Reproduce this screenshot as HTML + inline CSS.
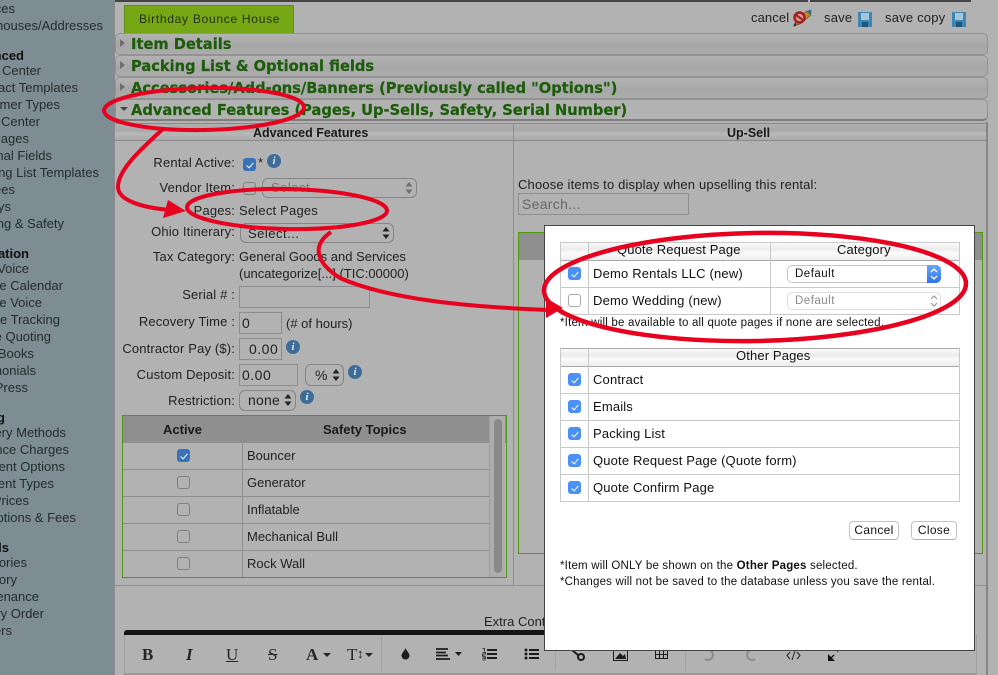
<!DOCTYPE html>
<html><head><meta charset="utf-8"><style>
html,body{margin:0;padding:0;width:998px;height:675px;overflow:hidden;background:#b2b2b2}
body{position:relative;font-family:"Liberation Sans",sans-serif;font-size:13px;color:#222}
.t{position:absolute;white-space:nowrap;line-height:16px;margin-top:1px}
.s{position:absolute;white-space:nowrap;line-height:16px;color:#262c2f;font-size:13px;margin-top:1px}
.l{position:absolute;white-space:nowrap;line-height:16px;right:763px;margin-top:1px;letter-spacing:.15px}
.r{position:absolute}
.h{position:absolute;white-space:nowrap;line-height:20px;font-family:"DejaVu Sans",sans-serif;font-weight:bold;font-size:14.65px;color:#1c5c0a;left:131px;margin-top:1px;-webkit-text-stroke:.2px #1c5c0a}
.acc{position:absolute;left:115px;width:871px;height:20px;border:1px solid #929292;border-radius:5px;background:linear-gradient(#b3b3b3 0,#a9a9a9 50%,#a6a6a6 55%,#acacac 100%)}
.tri{position:absolute;left:120px;width:0;height:0;border-top:4px solid transparent;border-bottom:4px solid transparent;border-left:5px solid #6e6e6e}
.cb{position:absolute;width:11px;height:11px;border:1px solid #808080;border-radius:3px;background:#b2b2b2}
.cb.on{background:#3a72b8;border-color:#3a72b8}
.m.cb{background:#fff;border-color:#aaa}
.m.cb.on{background:#4a90f5;border-color:#4a90f5}
.cb.on:after{content:"";position:absolute;left:3.5px;top:1.5px;width:3px;height:6px;border:solid #fff;border-width:0 1.4px 1.4px 0;transform:rotate(40deg)}
.inp{position:absolute;border:1px solid #8e8e8e;box-sizing:border-box}
.sel{position:absolute;border:1px solid #858585;border-radius:6px;box-sizing:border-box;background:#b2b2b2}
.i{position:absolute;width:14px;height:14px;border-radius:50%;background:#3e6c98;color:#dce6ee;font:italic bold 11px/14px "Liberation Serif",serif;text-align:center}
.ln{position:absolute;background:#8f8f8f}
.ml{position:absolute;background:#c9c9c9}
.hd{position:absolute;background:linear-gradient(#fafafa 0,#ececec 35%,#fbfbfb 60%,#eeeeee 100%)}
.tb{position:absolute;font:bold 17px/20px "Liberation Serif",serif;color:#262626}
.btn{position:absolute;border:1px solid #c4c4c4;border-bottom-color:#b0b0b0;border-radius:4px;background:#fff;box-sizing:border-box;text-align:center;font-size:12px;line-height:16px;letter-spacing:.3px;color:#111}
</style></head><body>

<!-- sidebar -->
<div class="r" style="left:0;top:0;width:114px;height:675px;background:#7e8c93"></div>
<div class="r" style="left:114px;top:0;width:1px;height:675px;background:#8b8b8b"></div>
<div class="s" style="right:983px;top:0">Places</div>
<div class="s" style="right:895px;top:17px">Warehouses/Addresses</div>
<div class="s" style="right:974px;top:47px;font-weight:bold;color:#111">Advanced</div>
<div class="s" style="right:957px;top:62px">Email Center</div>
<div class="s" style="right:920px;top:79px">Contract Templates</div>
<div class="s" style="right:938px;top:96px">Customer Types</div>
<div class="s" style="right:958px;top:113px">Doc Center</div>
<div class="s" style="right:969px;top:130px">Pages</div>
<div class="s" style="right:946px;top:147px">Additional Fields</div>
<div class="s" style="right:899px;top:164px">Packing List Templates</div>
<div class="s" style="right:983px;top:181px">Fees</div>
<div class="s" style="right:987px;top:198px">Keys</div>
<div class="s" style="right:934px;top:215px">Training &amp; Safety</div>
<div class="s" style="right:969px;top:245px;font-weight:bold;color:#111">Automation</div>
<div class="s" style="right:969px;top:260px">A Voice</div>
<div class="s" style="right:935px;top:277px">Online Calendar</div>
<div class="s" style="right:956px;top:294px">Online Voice</div>
<div class="s" style="right:938px;top:311px">Online Tracking</div>
<div class="s" style="right:947px;top:328px">Online Quoting</div>
<div class="s" style="right:964px;top:345px">QuickBooks</div>
<div class="s" style="right:962px;top:362px">Testimonials</div>
<div class="s" style="right:970px;top:379px">WordPress</div>
<div class="s" style="right:993px;top:409px;font-weight:bold;color:#111">Pricing</div>
<div class="s" style="right:932px;top:424px">Delivery Methods</div>
<div class="s" style="right:929px;top:441px">Distance Charges</div>
<div class="s" style="right:933px;top:458px">Payment Options</div>
<div class="s" style="right:944px;top:475px">Payment Types</div>
<div class="s" style="right:969px;top:492px">Prices</div>
<div class="s" style="right:922px;top:509px">Options &amp; Fees</div>
<div class="s" style="right:989px;top:539px;font-weight:bold;color:#111">Tools</div>
<div class="s" style="right:971px;top:554px">Categories</div>
<div class="s" style="right:981px;top:571px">Inventory</div>
<div class="s" style="right:959px;top:588px">Maintenance</div>
<div class="s" style="right:954px;top:605px">Factory Order</div>
<div class="s" style="right:986px;top:622px">Others</div>

<!-- top bar -->
<div class="r" style="left:115px;top:0;width:693px;height:2px;background:#444"></div>
<div class="r" style="left:810px;top:0;width:161px;height:2px;background:#444"></div>

<!-- tab -->
<div class="r" style="left:124px;top:5px;width:168px;height:27px;background:#76a816;border:1px solid #5f8f12;border-bottom:0"></div>
<div class="t" style="left:139px;top:10px;font-size:12px;letter-spacing:.72px;color:#26300f">Birthday Bounce House</div>

<!-- top actions -->
<div class="t" style="left:751px;top:9px;letter-spacing:.1px">cancel</div>
<svg class="r" style="left:793px;top:9px" width="19" height="18" viewBox="0 0 19 18"><path d="M1 17L3 11L14 2L18 6L7 15Z" fill="#c08a2a" stroke="#5a4418" stroke-width=".6"/><path d="M14 2L17.500 0.500L18.500 1.500L18 6Z" fill="#2f6f96"/><circle cx="6.500" cy="8.500" r="5" fill="#c9a09a" stroke="#a81c1c" stroke-width="2.400"/><path d="M3 6L10 11" stroke="#a81c1c" stroke-width="2.200"/><path d="M1 17L3 14.500" stroke="#1b2b55" stroke-width="1.800"/></svg>
<div class="t" style="left:824px;top:9px;letter-spacing:.2px">save</div>
<svg class="r" style="left:858px;top:12px" width="14" height="15" viewBox="0 0 14 15"><rect width="14" height="15" fill="#3f86b4"/><rect x="3" y="1" width="8" height="7" fill="#a6c6d8"/><rect x="4" y="10" width="6" height="5" fill="#1f5778"/></svg>
<div class="t" style="left:885px;top:9px;letter-spacing:.2px">save copy</div>
<svg class="r" style="left:952px;top:12px" width="14" height="15" viewBox="0 0 14 15"><rect width="14" height="15" fill="#3f86b4"/><rect x="3" y="1" width="8" height="7" fill="#a6c6d8"/><rect x="4" y="10" width="6" height="5" fill="#1f5778"/></svg>

<!-- accordions -->
<div class="acc" style="top:33px"></div>
<div class="acc" style="top:55px"></div>
<div class="acc" style="top:77px"></div>
<div class="acc" style="top:99px;background:#b2b2b2;border-bottom:2px solid #7d7d7d;height:19px"></div>
<div class="tri" style="top:39px"></div>
<div class="tri" style="top:61px"></div>
<div class="tri" style="top:83px"></div>
<div class="r" style="left:120px;top:107px;width:0;height:0;border-left:4px solid transparent;border-right:4px solid transparent;border-top:4px solid #444"></div>
<div class="h" style="top:34px">Item Details</div>
<div class="h" style="top:56px">Packing List &amp; Optional fields</div>
<div class="h" style="top:78px">Accessories/Add-ons/Banners (Previously called "Options")</div>
<div class="h" style="top:100px">Advanced Features (Pages, Up-Sells, Safety, Serial Number)</div>

<!-- panel header -->
<div class="r" style="left:115px;top:123px;width:871px;height:16px;background:linear-gradient(#b0b0b0,#a8a8a8 40%,#b8b8b8 60%,#a9a9a9);border-top:1px solid #8a8a8a;border-bottom:1px solid #8a8a8a"></div>
<div class="t" style="left:253px;top:124px;font-weight:bold;font-size:12.5px;color:#1a1a1a">Advanced Features</div>
<div class="t" style="left:727px;top:124px;font-weight:bold;font-size:12.5px;color:#1a1a1a">Up-Sell</div>
<div class="ln" style="left:513px;top:123px;width:1px;height:463px"></div>
<div class="ln" style="left:986px;top:122px;width:2px;height:553px;background:#858585"></div>
<div class="ln" style="left:115px;top:585px;width:871px;height:1px"></div>

<!-- form -->
<div class="l" style="top:154px">Rental Active:</div>
<div class="cb on" style="left:243px;top:158px"></div><div class="t" style="left:258px;top:154px">*</div><div class="i" style="left:267px;top:154px">i</div>
<div class="l" style="top:179px">Vendor Item:</div>
<div class="cb" style="left:243px;top:182px"></div>
<div class="sel" style="left:262px;top:178px;width:155px;height:20px"></div>
<div class="t" style="left:271px;top:179px;color:#787878;letter-spacing:.5px">Select...</div>
<svg class="r" style="left:405px;top:182px" width="8" height="12"><path d="M4 0L7.500 4.500H.5ZM4 12L7.500 7.500H.5Z" fill="#6e6e6e"/></svg>
<div class="l" style="top:202px">Pages:</div><div class="t" style="left:239px;top:202px;letter-spacing:.2px">Select Pages</div>
<div class="l" style="top:223px">Ohio Itinerary:</div>
<div class="sel" style="left:240px;top:223px;width:154px;height:20px"></div>
<div class="t" style="left:248px;top:225px;letter-spacing:.5px">Select...</div>
<svg class="r" style="left:382px;top:227px" width="8" height="12"><path d="M4 0L7.500 4.500H.5ZM4 12L7.500 7.500H.5Z" fill="#222"/></svg>
<div class="l" style="top:248px">Tax Category:</div><div class="t" style="left:239px;top:248px">General Goods and Services</div>
<div class="t" style="left:239px;top:265px">(uncategorize[...] (TIC:00000)</div>
<div class="l" style="top:286px">Serial # :</div><div class="inp" style="left:239px;top:286px;width:131px;height:22px"></div>
<div class="l" style="top:313px">Recovery Time :</div><div class="inp" style="left:239px;top:312px;width:43px;height:22px"></div>
<div class="t" style="left:242px;top:314px;font-size:14px">0</div><div class="t" style="left:286px;top:315px">(# of hours)</div>
<div class="l" style="top:340px">Contractor Pay ($):</div><div class="inp" style="left:239px;top:338px;width:43px;height:22px"></div>
<div class="t" style="left:249px;top:340px;font-size:14px;letter-spacing:.5px">0.00</div><div class="i" style="left:286px;top:340px">i</div>
<div class="l" style="top:366px">Custom Deposit:</div><div class="inp" style="left:239px;top:364px;width:59px;height:22px"></div>
<div class="t" style="left:242px;top:366px;font-size:14px;letter-spacing:.5px">0.00</div>
<div class="sel" style="left:305px;top:364px;width:39px;height:22px"></div><div class="t" style="left:315px;top:366px;font-size:14px">%</div>
<svg class="r" style="left:332px;top:369px" width="8" height="12"><path d="M4 0L7.500 4.500H.5ZM4 12L7.500 7.500H.5Z" fill="#222"/></svg>
<div class="i" style="left:348px;top:365px">i</div>
<div class="l" style="top:392px">Restriction:</div><div class="sel" style="left:239px;top:390px;width:57px;height:21px"></div>
<div class="t" style="left:248px;top:391px;font-size:14px;letter-spacing:.2px">none</div>
<svg class="r" style="left:284px;top:394px" width="8" height="12"><path d="M4 0L7.500 4.500H.5ZM4 12L7.500 7.500H.5Z" fill="#222"/></svg>
<div class="i" style="left:300px;top:390px">i</div>

<!-- safety table -->
<div class="r" style="left:122px;top:415px;width:383px;height:161px;border:1px solid #4f9a12"></div>
<div class="r" style="left:123px;top:416px;width:383px;height:27px;background:#8f8f8f"></div>
<div class="r" style="left:490px;top:416px;width:15px;height:161px;background:#adadad"></div>
<div class="r" style="left:494px;top:419px;width:8px;height:154px;background:#8a8a8a;border-radius:4px"></div>
<div class="ln" style="left:242px;top:443px;width:1px;height:134px"></div>
<div class="ln" style="left:489px;top:416px;width:1px;height:161px;background:#9e9e9e"></div>
<div class="ln" style="left:123px;top:469px;width:366px;height:1px"></div>
<div class="ln" style="left:123px;top:496px;width:366px;height:1px"></div>
<div class="ln" style="left:123px;top:523px;width:366px;height:1px"></div>
<div class="ln" style="left:123px;top:550px;width:366px;height:1px"></div>
<div class="t" style="left:163px;top:421px;font-weight:bold;color:#1a1a1a">Active</div>
<div class="t" style="left:323px;top:421px;font-weight:bold;color:#1a1a1a">Safety Topics</div>
<div class="cb on" style="left:177px;top:449px"></div>
<div class="cb" style="left:177px;top:476px"></div>
<div class="cb" style="left:177px;top:503px"></div>
<div class="cb" style="left:177px;top:530px"></div>
<div class="cb" style="left:177px;top:557px"></div>
<div class="t" style="left:247px;top:447px">Bouncer</div>
<div class="t" style="left:247px;top:474px">Generator</div>
<div class="t" style="left:247px;top:501px">Inflatable</div>
<div class="t" style="left:247px;top:528px">Mechanical Bull</div>
<div class="t" style="left:247px;top:555px">Rock Wall</div>

<!-- upsell -->
<div class="t" style="left:518px;top:176px;font-size:13px;letter-spacing:.16px">Choose items to display when upselling this rental:</div>
<div class="inp" style="left:518px;top:193px;width:171px;height:22px"></div>
<div class="t" style="left:522px;top:195px;font-size:14px;letter-spacing:.3px;color:#666">Search...</div>
<div class="r" style="left:518px;top:232px;width:463px;height:320px;border:1px solid #4f9a12"></div>
<div class="r" style="left:519px;top:233px;width:463px;height:27px;background:#8f8f8f"></div>

<!-- editor -->
<div class="t" style="left:484px;top:613px">Extra Content</div>
<div class="r" style="left:124px;top:630px;width:851px;height:5px;background:#151515;border-radius:3px 0 0 0"></div>
<div class="r" style="left:124px;top:635px;width:1px;height:38px;background:#a0a0a0"></div>
<div class="r" style="left:976px;top:635px;width:1px;height:38px;background:#a0a0a0"></div>
<div class="r" style="left:124px;top:673px;width:853px;height:2px;background:#999"></div>
<div class="r" style="left:381px;top:637px;width:1px;height:34px;background:#a2a2a2"></div>
<div class="r" style="left:555px;top:637px;width:1px;height:34px;background:#a2a2a2"></div>
<div class="r" style="left:685px;top:637px;width:1px;height:34px;background:#a2a2a2"></div>
<div class="tb" style="left:142px;top:645px">B</div>
<div class="tb" style="left:186px;top:645px;font-style:italic">I</div>
<div class="tb" style="left:226px;top:645px;font-weight:normal;text-decoration:underline">U</div>
<div class="tb" style="left:268px;top:645px;font-weight:normal;text-decoration:line-through">S</div>
<div class="tb" style="left:306px;top:645px">A</div>
<div class="r" style="left:323px;top:653px;width:0;height:0;border-left:4px solid transparent;border-right:4px solid transparent;border-top:4px solid #262626"></div>
<div class="tb" style="left:347px;top:645px;font-weight:normal">T</div>
<div class="t" style="left:357px;top:645px;font-size:13px">↕</div>
<div class="r" style="left:365px;top:653px;width:0;height:0;border-left:4px solid transparent;border-right:4px solid transparent;border-top:4px solid #262626"></div>
<svg class="r" style="left:401px;top:648px" width="9" height="12"><path d="M4.500 0C5.500 3 8.500 5 8.500 7.500A4 4 0 0 1 .5 7.500C.5 5 3.500 3 4.500 0Z" fill="#1c1c1c"/></svg>
<svg class="r" style="left:436px;top:648px" width="26" height="12"><path d="M0 1h12M0 4.500h10M0 7.500h12M0 11h14" stroke="#1c1c1c" stroke-width="1.800"/><path d="M19 4h7l-3.500 4z" fill="#1c1c1c"/></svg>
<svg class="r" style="left:482px;top:648px" width="15" height="13"><path d="M5 2h10M5 6h10M5 10h10" stroke="#1c1c1c" stroke-width="2"/><path d="M.5 .5h2v3M.5 4.500h3v1.500h-3v2h3M.5 9h3v1.500h-3M.5 12h3" stroke="#1c1c1c" stroke-width=".8" fill="none"/></svg>
<svg class="r" style="left:524px;top:648px" width="15" height="13"><path d="M5 2h10M5 6h10M5 10h10" stroke="#1c1c1c" stroke-width="2"/><circle cx="2" cy="2" r="1.500" fill="#1c1c1c"/><circle cx="2" cy="6" r="1.500" fill="#1c1c1c"/><circle cx="2" cy="10" r="1.500" fill="#1c1c1c"/></svg>
<svg class="r" style="left:572px;top:649px" width="14" height="12"><circle cx="9" cy="8" r="3" fill="none" stroke="#1c1c1c" stroke-width="2"/><path d="M0 1L6 6" stroke="#1c1c1c" stroke-width="2"/></svg>
<svg class="r" style="left:613px;top:650px" width="15" height="11"><path d="M.5 0V10.500H14.500V0" fill="none" stroke="#1c1c1c"/><path d="M2 9L7 3L10 6L12 4L13 9Z" fill="#1c1c1c"/></svg>
<svg class="r" style="left:655px;top:650px" width="13" height="9"><path d="M.5 .5h12v8h-12zM.5 4.500h12M4.500 .5v8M8.500 .5v8" fill="none" stroke="#1c1c1c"/></svg>
<svg class="r" style="left:703px;top:649px" width="12" height="12"><path d="M4 1A5 5 0 1 1 2 10" fill="none" stroke="#8c8c8c" stroke-width="2"/></svg>
<svg class="r" style="left:745px;top:649px" width="12" height="12"><path d="M8 1A5 5 0 1 0 10 10" fill="none" stroke="#8c8c8c" stroke-width="2"/></svg>
<svg class="r" style="left:786px;top:651px" width="15" height="9"><path d="M4 1L1 4.500L4 8M11 1L14 4.500L11 8M9 0L6 9" fill="none" stroke="#222" stroke-width="1"/></svg>
<svg class="r" style="left:828px;top:649px" width="13" height="12"><path d="M0 12V6L6 12ZM3 9L6 6" fill="#111" stroke="#111" stroke-width="1.400"/><path d="M9 3L12 0" stroke="#555" stroke-width="1"/></svg>

<!-- modal -->
<div class="r" style="left:544px;top:225px;width:431px;height:426px;background:#fff;border:1px solid #444;box-sizing:border-box"></div>

<div class="hd" style="left:561px;top:243px;width:398px;height:17px"></div>
<div class="ml" style="left:560px;top:242px;width:400px;height:1px"></div>
<div class="ml" style="left:560px;top:260px;width:400px;height:1px;background:#aaa"></div>
<div class="ml" style="left:560px;top:287px;width:400px;height:1px"></div>
<div class="ml" style="left:560px;top:314px;width:400px;height:1px"></div>
<div class="ml" style="left:560px;top:242px;width:1px;height:73px"></div>
<div class="ml" style="left:959px;top:242px;width:1px;height:73px"></div>
<div class="ml" style="left:588px;top:242px;width:1px;height:73px"></div>
<div class="ml" style="left:770px;top:242px;width:1px;height:73px"></div>
<div class="t" style="left:617px;top:241px;color:#111;letter-spacing:.12px">Quote Request Page</div>
<div class="t" style="left:837px;top:241px;color:#111;letter-spacing:.12px">Category</div>
<div class="cb m on" style="left:568px;top:267px"></div>
<div class="cb m" style="left:568px;top:294px"></div>
<div class="t" style="left:593px;top:265px;color:#111;letter-spacing:.18px">Demo Rentals LLC (new)</div>
<div class="t" style="left:593px;top:292px;color:#111;letter-spacing:.18px">Demo Wedding (new)</div>
<div class="r" style="left:787px;top:265px;width:154px;height:18px;border:1px solid #c4c4c4;border-radius:5px;background:#fff;box-sizing:border-box"></div>
<div class="r" style="left:927px;top:265px;width:14px;height:18px;border-radius:0 5px 5px 0;background:linear-gradient(#6aa6fa,#2f74ee)"></div>
<svg class="r" style="left:930px;top:268px" width="8" height="12"><path d="M1 4L4 1L7 4M1 8L4 11L7 8" fill="none" stroke="#fff" stroke-width="1.300"/></svg>
<div class="t" style="left:795px;top:265px;font-size:11.500px;letter-spacing:.5px;color:#111">Default</div>
<div class="r" style="left:787px;top:292px;width:154px;height:18px;border:1px solid #dedede;border-radius:5px;background:#fff;box-sizing:border-box"></div>
<svg class="r" style="left:930px;top:295px" width="8" height="12"><path d="M1 4L4 1L7 4M1 8L4 11L7 8" fill="none" stroke="#999" stroke-width="1.200"/></svg>
<div class="t" style="left:795px;top:292px;font-size:11.500px;letter-spacing:.5px;color:#8a8a8a">Default</div>
<div class="t" style="left:560px;top:314px;font-size:11.500px;letter-spacing:.2px;color:#111">*Item will be available to all quote pages if none are selected.</div>

<div class="hd" style="left:561px;top:349px;width:398px;height:17px"></div>
<div class="ml" style="left:560px;top:348px;width:400px;height:1px;background:#aaa"></div>
<div class="ml" style="left:560px;top:366px;width:400px;height:1px;background:#aaa"></div>
<div class="ml" style="left:560px;top:393px;width:400px;height:1px"></div>
<div class="ml" style="left:560px;top:420px;width:400px;height:1px"></div>
<div class="ml" style="left:560px;top:447px;width:400px;height:1px"></div>
<div class="ml" style="left:560px;top:474px;width:400px;height:1px"></div>
<div class="ml" style="left:560px;top:501px;width:400px;height:1px"></div>
<div class="ml" style="left:560px;top:348px;width:1px;height:154px"></div>
<div class="ml" style="left:959px;top:348px;width:1px;height:154px"></div>
<div class="ml" style="left:588px;top:348px;width:1px;height:154px"></div>
<div class="t" style="left:736px;top:347px;color:#111;letter-spacing:.13px">Other Pages</div>
<div class="cb m on" style="left:568px;top:373px"></div>
<div class="cb m on" style="left:568px;top:400px"></div>
<div class="cb m on" style="left:568px;top:427px"></div>
<div class="cb m on" style="left:568px;top:454px"></div>
<div class="cb m on" style="left:568px;top:481px"></div>
<div class="t" style="left:593px;top:371px;color:#111;letter-spacing:.16px">Contract</div>
<div class="t" style="left:593px;top:398px;color:#111;letter-spacing:.16px">Emails</div>
<div class="t" style="left:593px;top:425px;color:#111;letter-spacing:.16px">Packing List</div>
<div class="t" style="left:593px;top:452px;color:#111;letter-spacing:.16px">Quote Request Page (Quote form)</div>
<div class="t" style="left:593px;top:479px;color:#111;letter-spacing:.16px">Quote Confirm Page</div>

<div class="btn" style="left:849px;top:521px;width:50px;height:19px">Cancel</div>
<div class="btn" style="left:911px;top:521px;width:46px;height:19px">Close</div>
<div class="t" style="left:560px;top:557px;font-size:11.500px;letter-spacing:.2px;color:#111">*Item will ONLY be shown on the <b>Other Pages</b> selected.</div>
<div class="t" style="left:560px;top:573px;font-size:11.500px;letter-spacing:.2px;color:#111">*Changes will not be saved to the database unless you save the rental.</div>

<!-- annotations -->
<svg class="r" style="left:0;top:0" width="998" height="675" fill="none" stroke="#e8001f" stroke-width="4">
<ellipse cx="204" cy="109" rx="100" ry="21" transform="rotate(-1 204 109)"/>
<path d="M164 128C140 150 118 170 118 187C118 198 135 207 170 210"/>
<path d="M168 200L186 211L163 218Z" fill="#e8001f" stroke="none"/>
<ellipse cx="287" cy="209" rx="100" ry="20" transform="rotate(1 287 209)"/>
<path d="M331 232C312 245 315 262 340 278C390 300 470 307 550 310"/>
<path d="M546 298L563 308L546 318Z" fill="#e8001f" stroke="none"/>
<ellipse cx="755" cy="287" rx="211" ry="54" transform="rotate(-1 755 287)" stroke-width="4.500"/>
</svg>
</body></html>
